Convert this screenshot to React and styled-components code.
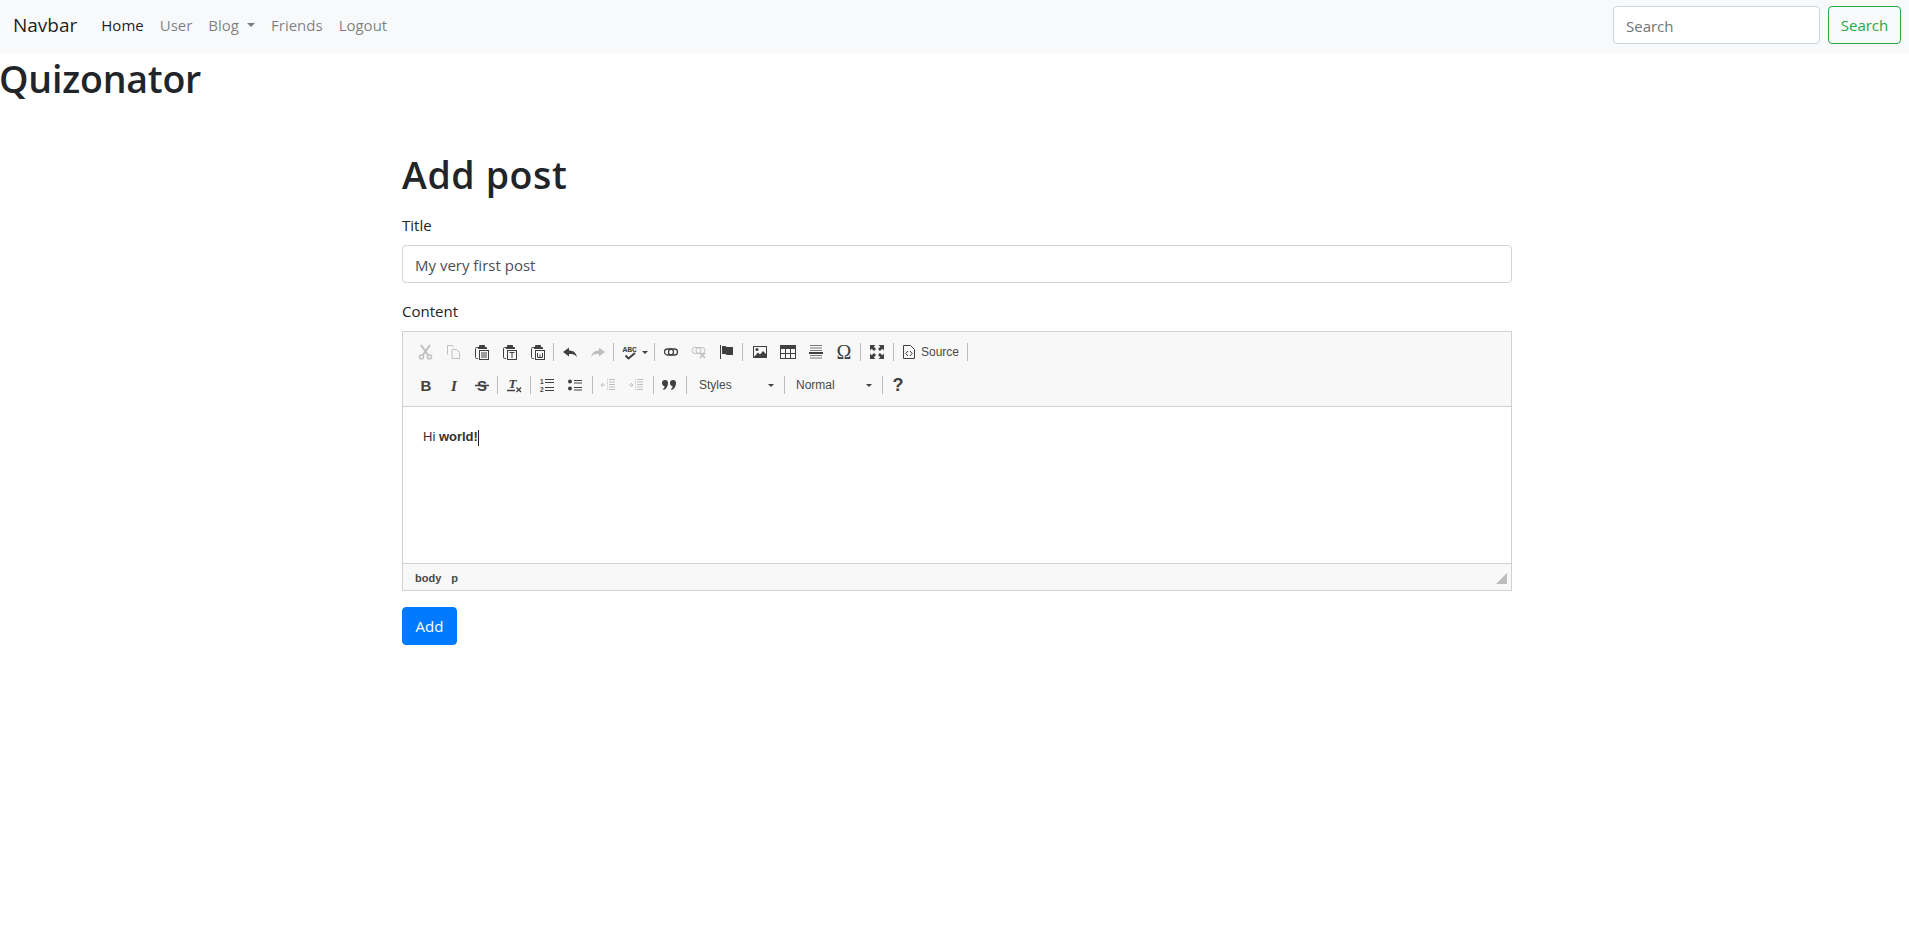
import React from "react";
import styled, { createGlobalStyle } from "styled-components";

const Global = createGlobalStyle`
  html, body { margin: 0; padding: 0; background: #fff; }
  body { font-family: "Open Sans", "Noto Sans", sans-serif; font-size: 15px; line-height: 24px; color: #212529; }
  * { box-sizing: border-box; }
`;

const Nav = styled.nav`
  height: 53px; background: #f8f9fa; display: flex; align-items: flex-start;
  padding: 6px 8px 0 13px;
`;
const Brand = styled.a`
  font-size: 19px; height: 38px; line-height: 38px; color: rgba(0,0,0,.9); margin-right: 24px;
`;
const NavLinks = styled.div`
  display: flex; align-items: center; gap: 16px; flex: 1; height: 38px;
`;
const NavLink = styled.a`
  color: ${p => (p.$active ? "rgba(0,0,0,.9)" : "rgba(0,0,0,.5)")};
  display: inline-flex; align-items: center;
`;
const Caret = styled.span`
  display: inline-block; margin-left: 8px; border-top: 4px solid currentColor;
  border-left: 4px solid transparent; border-right: 4px solid transparent;
`;
const SearchForm = styled.form`
  display: flex; gap: 8px; margin: 0;
`;
const SearchInput = styled.input`
  width: 207px; height: 38px; border: 1px solid #ced4da; border-radius: 4px; padding: 1px 12px 0;
  font: inherit; color: #495057; background: #fff;
  &::placeholder { color: #6c757d; opacity: 1; }
`;
const SearchButton = styled.button`
  width: 73px; height: 38px; border: 1px solid #28a745; border-radius: 4px; background: transparent;
  color: #28a745; font: inherit; padding: 0;
`;
const Logo = styled.h1`
  margin: 0 0 6px -1px; padding-top: 2px; font-size: 37.5px; line-height: 48px; font-weight: 600; color: #212529;
  letter-spacing: -0.2px;
`;
const Wrapper = styled.main`
  width: 1110px; margin: 48px 0 0 402px;
`;
const Heading = styled.h1`
  margin: 0 0 14px; font-size: 37.5px; line-height: 48px; font-weight: 600; color: #212529;
  letter-spacing: 0.6px;
`;
const Label = styled.label`
  display: block; margin-bottom: 8px; line-height: 24px;
`;
const Field = styled.div`
  margin-bottom: 16px;
`;
const TextInput = styled.input`
  display: block; width: 100%; height: 38px; border: 1px solid #ced4da; border-radius: 4px;
  padding: 1px 12px 0; font: inherit; color: #495057; background: #fff;
`;
const Editor = styled.div`
  border: 1px solid #d1d1d1; height: 260px; display: flex; flex-direction: column; font-family: "Liberation Sans", Arial, sans-serif;
`;
const Toolbox = styled.div`
  height: 75px; background: #f8f8f8; border-bottom: 1px solid #d1d1d1; padding: 6px 0 0 9px;
  display: flex; flex-direction: column; gap: 5px;
`;
const ToolRow = styled.div`
  display: flex; align-items: center; height: 28px;
`;
const ToolButton = styled.span`
  display: flex; align-items: center; height: 28px; width: ${p => p.$w || 28}px; padding-left: 6px; flex: none;
  font-size: 12px; color: #484848; gap: 4px;
  svg { flex: none; opacity: ${p => (p.$off ? 0.3 : 1)}; }
`;
const Glyph = styled.span`
  display: block; width: 16px; height: 16px; line-height: 16px; text-align: center; color: #404040;
  font-family: ${p => p.$serif ? '"Liberation Serif", serif' : '"Liberation Sans", sans-serif'};
  font-size: ${p => p.$size}px; font-weight: ${p => p.$weight || 400};
`;
const Sep = styled.span`
  width: 1px; height: 18px; background: #bcbcbc; flex: none; margin: 0 ${p => p.$r ?? 2}px 0 ${p => p.$l ?? 1}px;
`;
const MiniCaret = styled.span`
  border-top: 3px solid #404040; border-left: 3px solid transparent; border-right: 3px solid transparent;
`;
const Combo = styled.span`
  display: flex; align-items: center; justify-content: space-between; width: 94px; height: 28px;
  padding: 0 9px 0 ${p => p.$pl}px; font-size: 12px; color: #484848; flex: none;
`;
const Content = styled.div`
  flex: 1; background: #fff; padding: 20px; padding-top: 20px; font-size: 13px; line-height: 20.8px; color: #333;
  display: flex;
`;
const Cursor = styled.span`
  display: inline-block; width: 1px; height: 16px; background: #222; margin-top: 3px;
`;
const Footer = styled.div`
  height: 27px; background: #f8f8f8; border-top: 1px solid #d1d1d1; display: flex; align-items: center;
  justify-content: space-between; padding: 1px 4px 0 12px; font-size: 11px; font-weight: 700; color: #484848;
`;
const Path = styled.div`
  display: flex; gap: 10px;
`;
const AddButton = styled.button`
  width: 55px; height: 38px; border: 1px solid #007bff; background: #007bff; color: #fff; border-radius: 4px; font: inherit; padding: 0;
`;
const Ico = styled.svg`
  display: block; fill: none; stroke: #404040; stroke-width: 1;
  text { stroke: none; fill: #404040; }
  .f { fill: #404040; stroke: none; }
`;

const I = ({ children }) => <Ico width="16" height="16" viewBox="0 0 16 16">{children}</Ico>;

const Clip = ({ children }) => (
  <I>
    <path d="M4 3.500H2.500Q1.500 3.500 1.500 4.500V13.500Q1.500 14.500 2.500 14.500H4" />
    <path d="M12 3.500H12.500V5" />
    <path className="f" d="M4 3h1V1.500Q5 1 6 1H10Q11 1 11 1.500V3h1V5H4z" />
    <rect x="5.500" y="6.500" width="9" height="9" />
    {children}
  </I>
);

const icons = {
  cut: <I><circle cx="3.500" cy="13" r="2" strokeWidth="1.500" /><circle cx="11.500" cy="13" r="2" strokeWidth="1.500" /><path d="M3 1L10 11M12 1L5 11" strokeWidth="2" /></I>,
  copy: <I><path d="M1.500 10.500V1.500H6.500L8 3M6 5.500H10.500L13.500 8.500V14.500H6z" /></I>,
  paste: <Clip><path d="M7 9H13M7 11H13M7 13H13" /></Clip>,
  pasteText: <Clip><path d="M7.500 8.500H12.500M10 8.500V14" /></Clip>,
  pasteWord: <Clip><path d="M7.500 9V13.500H12.500V9M10 10.500V13" /></Clip>,
  undo: <I><path className="f" d="M1 8L7 3.500V6.500C11 6.500 14 8.500 15 13C13 10.500 11 10 7 10V12.500z" /></I>,
  redo: <I><path className="f" d="M15 8L9 3.500V6.500C5 6.500 2 8.500 1 13C3 10.500 5 10 9 10V12.500z" /></I>,
  spell: <I><text x="0.500" y="8" fontSize="8" fontWeight="700" fontFamily="Liberation Mono, monospace">ABC</text><path d="M3.500 11.500L6.500 14.500L13 9" strokeWidth="2" /></I>,
  link: <I><rect x="1.500" y="5" width="9" height="6" rx="3" strokeWidth="1.300" /><rect x="5.500" y="5" width="9" height="6" rx="3" strokeWidth="1.300" /></I>,
  unlink: <I><rect x="1" y="3.500" width="9" height="6" rx="3" /><rect x="5" y="3.500" width="9" height="6" rx="3" /><path d="M9 9L14 14M14 9L9 14" strokeWidth="1.500" /></I>,
  flag: <I><path d="M1.500 1V15" /><path className="f" d="M3 2H6L8 3H14V11H8L6 10H3z" /></I>,
  image: <I><rect x="1.500" y="2.500" width="13" height="11" /><circle className="f" cx="5" cy="5.500" r="1.500" /><path className="f" d="M2 13L6 8.500L8 10.500L11 7L14 10V13z" /></I>,
  table: <I><rect x="0.500" y="1.500" width="15" height="13" /><path className="f" d="M0 1H16V5H0z" /><path d="M5.500 5V14M10.500 5V14M1 9.500H15" /></I>,
  hr: <I><path d="M2 1.500H14M2 4H14M2 6.500H14M2 11.500H14M2 14H14" stroke="#777" /><path d="M1 9H15" strokeWidth="2" /></I>,
  max: <I><path className="f" d="M1 1H6.500L4.800 2.700L7 5L5 7L2.700 4.800L1 6.500zM15 1V6.500L13.300 4.800L11 7L9 5L11.300 2.700L9.500 1zM1 15V9.500L2.700 11.300L5 9L7 11L4.800 13.300L6.500 15zM15 15H9.500L11.300 13.300L9 11L11 9L13.300 11.300L15 9.500z" /></I>,
  source: <I><path d="M2.500 1.500H9.500L13.500 5.500V14.500H2.500z" /><path d="M7 7L4.800 9.500L7 12M9 7L11.200 9.500L9 12" /></I>,
  bold: <I><text x="8" y="13.500" textAnchor="middle" fontSize="15" fontWeight="700" fontFamily="Liberation Sans, sans-serif">B</text></I>,
  italic: <I><text x="8" y="13.500" textAnchor="middle" fontSize="15" fontWeight="700" fontStyle="italic" fontFamily="Liberation Serif, serif">I</text></I>,
  strike: <I><text x="8" y="13.500" textAnchor="middle" fontSize="15" fontWeight="700" fontFamily="Liberation Sans, sans-serif">S</text><path d="M1 8.500H15" strokeWidth="1.500" /></I>,
  clear: <I><text x="6.500" y="11" textAnchor="middle" fontSize="13" fontWeight="700" fontStyle="italic" fontFamily="Liberation Serif, serif">T</text><path d="M1 13.500H9" strokeWidth="1.500" /><path d="M10.500 10.500L15 15M15 10.500L10.500 15" strokeWidth="1.300" /></I>,
  ol: <I><text x="1" y="7" fontSize="6.500" fontWeight="700" fontFamily="Liberation Sans, sans-serif">1</text><text x="1" y="14.500" fontSize="6.500" fontWeight="700" fontFamily="Liberation Sans, sans-serif">2</text><path d="M6 2.500H15M6 5.500H15M6 10.500H15M6 13.500H15" /></I>,
  ul: <I><circle className="f" cx="3" cy="4.500" r="2" /><circle className="f" cx="3" cy="11.500" r="2" /><path d="M7 3.500H15M7 6H15M7 10.500H15M7 13H15" /></I>,
  outdent: <I><path d="M9 2.500H15M9 5H15M9 7.500H15M9 10H15M9 12.500H15" /><path d="M7.500 2V14" strokeDasharray="1 1" /><path d="M1 8H5M3 6L1 8L3 10" /></I>,
  indent: <I><path d="M9 2.500H15M9 5H15M9 7.500H15M9 10H15M9 12.500H15" /><path d="M7.500 2V14" strokeDasharray="1 1" /><path d="M1 8H5M3 6L5 8L3 10" /></I>,
  quote: <I><path className="f" d="M1 6a3 3 0 1 1 6 0c0 3-1.500 6-4.500 7l-.5-1c1-.500 1.500-1.500 1.500-3-1.500 0-2.500-1.300-2.500-3zM9 6a3 3 0 1 1 6 0c0 3-1.500 6-4.500 7l-.5-1c1-.500 1.500-1.500 1.500-3-1.500 0-2.500-1.300-2.500-3z" /></I>,
};

const B = ({ n, off }) => <ToolButton $off={off}>{icons[n]}</ToolButton>;

export default function App() {
  return (
    <>
      <Global />
      <Nav>
        <Brand>Navbar</Brand>
        <NavLinks>
          <NavLink $active>Home</NavLink>
          <NavLink>User</NavLink>
          <NavLink>Blog<Caret /></NavLink>
          <NavLink>Friends</NavLink>
          <NavLink>Logout</NavLink>
        </NavLinks>
        <SearchForm>
          <SearchInput placeholder="Search" />
          <SearchButton type="button">Search</SearchButton>
        </SearchForm>
      </Nav>
      <Logo>Quizonator</Logo>
      <Wrapper>
        <Heading>Add post</Heading>
        <Field>
          <Label>Title</Label>
          <TextInput defaultValue="My very first post" />
        </Field>
        <Field>
          <Label>Content</Label>
          <Editor>
            <Toolbox>
              <ToolRow>
                <B n="cut" off /><B n="copy" off /><B n="paste" /><B n="pasteText" /><B n="pasteWord" />
                <Sep />
                <B n="undo" /><B n="redo" off />
                <Sep />
                <ToolButton $w={37}>{icons.spell}<MiniCaret /></ToolButton>
                <Sep />
                <B n="link" /><B n="unlink" off /><B n="flag" />
                <Sep $r={3} />
                <B n="image" /><B n="table" /><B n="hr" />
                <ToolButton><Glyph $serif $size={20}>Ω</Glyph></ToolButton>
                <Sep $l={2} />
                <B n="max" />
                <Sep $l={2} $r={1} />
                <ToolButton $w={70}>{icons.source}<span>Source</span></ToolButton>
                <Sep $l={2} />
              </ToolRow>
              <ToolRow>
                <B n="bold" /><B n="italic" /><B n="strike" />
                <Sep />
                <B n="clear" />
                <Sep $l={2} />
                <B n="ol" /><B n="ul" />
                <Sep $l={3} $r={1} />
                <B n="outdent" off /><B n="indent" off />
                <Sep $l={3} $r={1} />
                <B n="quote" />
                <Sep $l={3} />
                <Combo $pl={10}>Styles<MiniCaret /></Combo>
                <Sep />
                <Combo $pl={9}>Normal<MiniCaret /></Combo>
                <Sep $r={1} />
                <ToolButton><Glyph $size={18} $weight={700}>?</Glyph></ToolButton>
              </ToolRow>
            </Toolbox>
            <Content>
              <span>Hi <strong>world!</strong></span><Cursor />
            </Content>
            <Footer>
              <Path><span>body</span><span>p</span></Path>
              <svg width="12" height="12" viewBox="0 0 12 12"><path d="M12 1V12H1z" fill="#bcbcbc" /></svg>
            </Footer>
          </Editor>
        </Field>
        <AddButton type="button">Add</AddButton>
      </Wrapper>
    </>
  );
}
